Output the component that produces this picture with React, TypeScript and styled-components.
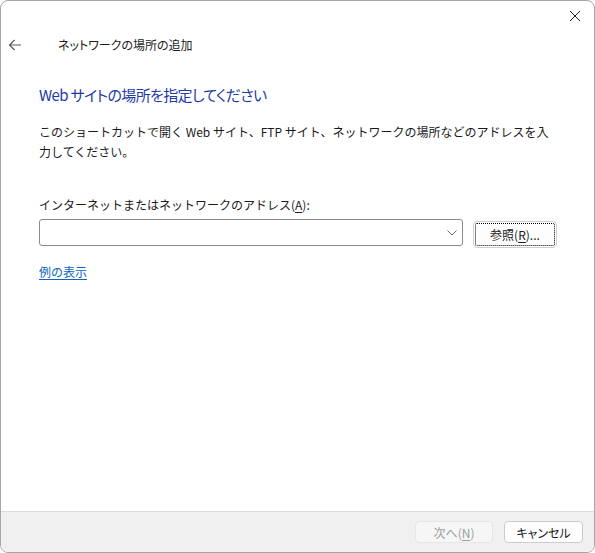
import React from "react";
import styled, { createGlobalStyle } from "styled-components";

const Global = createGlobalStyle`
  html, body { margin: 0; padding: 0; background: #ffffff; }
  body { font-family: "Noto Sans CJK JP", "Noto Sans", sans-serif; }
  * { box-sizing: border-box; }
`;

const Window = styled.div`
  width: 595px;
  height: 553px;
  border: 1px solid #a6a6a6;
  border-radius: 8px;
  overflow: hidden;
  background: #ffffff;
  display: flex;
  flex-direction: column;
  font-family: "Noto Sans CJK JP", "Noto Sans", sans-serif;
  color: #1a1a1a;
`;

const TitleBar = styled.div`
  height: 30px;
  display: flex;
  justify-content: flex-end;
  align-items: center;
  padding-right: 5px;
`;

const CloseButton = styled.div`
  width: 28px;
  height: 28px;
  display: flex;
  align-items: center;
  justify-content: center;
`;

const HeaderRow = styled.div`
  height: 28px;
  display: flex;
  align-items: center;
  padding-left: 7px;
`;

const BackArrow = styled.div`
  width: 14px;
  height: 14px;
  display: flex;
  align-items: center;
  justify-content: center;
`;

const WizardTitle = styled.div`
  margin-left: 36px;
  font-size: 12px;
  line-height: 16px;
  font-feature-settings: "palt";
  color: #1a1a1a;
`;

const Content = styled.div`
  padding: 0 0 0 38px;
  display: flex;
  flex-direction: column;
  flex: 1;
`;

const Heading = styled.h1`
  margin: 25px 0 0 0;
  font-size: 15px;
  line-height: 22px;
  font-weight: 400;
  font-feature-settings: "palt";
  letter-spacing: -0.65px;
  color: #1d3aa6;
`;

const Paragraph = styled.p`
  margin: 16px 0 0 0;
  font-size: 12px;
  line-height: 20px;
  white-space: nowrap;
`;

const FieldLabel = styled.div`
  margin-top: 33px;
  font-size: 12px;
  line-height: 20px;
`;

const Mnemonic = styled.span`
  text-decoration: underline;
  text-underline-offset: 2px;
`;

const InputRow = styled.div`
  margin-top: 4px;
  display: flex;
  align-items: flex-start;
  gap: 10px;
`;

const Combo = styled.div`
  width: 424px;
  height: 27px;
  border: 1px solid #8a8a8a;
  border-radius: 3px;
  display: flex;
  align-items: center;
  justify-content: flex-end;
  padding-right: 5px;
  background: #ffffff;
`;

const BrowseButton = styled.div`
  position: relative;
  margin-top: 2px;
  width: 84px;
  height: 27px;
  border: 1px solid #cfcfcf;
  border-radius: 4px;
  background: #fdfdfd;
  font-size: 12px;
  font-feature-settings: "palt";
  display: flex;
  align-items: center;
  justify-content: center;
  &::after {
    content: "";
    position: absolute;
    inset: 1px;
    border: 1px dotted #000000;
    border-radius: 2px;
  }
`;

const ExampleLink = styled.a`
  margin-top: 14px;
  align-self: flex-start;
  font-size: 12px;
  line-height: 20px;
  color: #0a66c2;
  text-decoration: underline;
  text-underline-offset: 2px;
  cursor: pointer;
`;

const Footer = styled.div`
  height: 41px;
  border-top: 1px solid #dcdcdc;
  background: #f0f0f0;
  display: flex;
  justify-content: flex-end;
  align-items: flex-start;
  padding: 9px 11px 0 0;
  gap: 11px;
`;

const FooterButton = styled.div<{ $disabled?: boolean; $w: number }>`
  width: ${(p) => p.$w}px;
  height: 22px;
  border-radius: 4px;
  border: 1px solid ${(p) => (p.$disabled ? "#e6e6e6" : "#cccccc")};
  background: ${(p) => (p.$disabled ? "#f6f6f6" : "#fdfdfd")};
  color: ${(p) => (p.$disabled ? "#9d9d9d" : "#1a1a1a")};
  font-size: 12px;
  font-feature-settings: "palt";
  display: flex;
  align-items: center;
  justify-content: center;
`;

export default function App() {
  return (
    <>
      <Global />
      <Window>
        <TitleBar>
          <CloseButton>
            <svg width="12" height="12" viewBox="0 0 12 12">
              <path d="M1 1 L11 11 M11 1 L1 11" stroke="#1a1a1a" strokeWidth="1" fill="none" />
            </svg>
          </CloseButton>
        </TitleBar>
        <HeaderRow>
          <BackArrow>
            <svg width="14" height="12" viewBox="0 0 14 12">
              <path d="M13 6 H1.5 M6.5 1 L1.5 6 L6.5 11" stroke="#5a5a5a" strokeWidth="1.2" fill="none" />
            </svg>
          </BackArrow>
          <WizardTitle>ネットワークの場所の追加</WizardTitle>
        </HeaderRow>
        <Content>
          <Heading>Web サイトの場所を指定してください</Heading>
          <Paragraph>
            このショートカットで開く Web サイト、FTP サイト、ネットワークの場所などのアドレスを入
            <br />
            力してください。
          </Paragraph>
          <FieldLabel>
            インターネットまたはネットワークのアドレス(<Mnemonic>A</Mnemonic>):
          </FieldLabel>
          <InputRow>
            <Combo>
              <svg width="10" height="6" viewBox="0 0 10 6">
                <path d="M0.5 0.5 L5 5 L9.5 0.5" stroke="#6a6a6a" strokeWidth="1" fill="none" />
              </svg>
            </Combo>
            <BrowseButton>
              参照(<Mnemonic>R</Mnemonic>)...
            </BrowseButton>
          </InputRow>
          <ExampleLink>例の表示</ExampleLink>
        </Content>
        <Footer>
          <FooterButton $disabled $w={78}>
            次へ(<Mnemonic>N</Mnemonic>)
          </FooterButton>
          <FooterButton $w={79}>キャンセル</FooterButton>
        </Footer>
      </Window>
    </>
  );
}
